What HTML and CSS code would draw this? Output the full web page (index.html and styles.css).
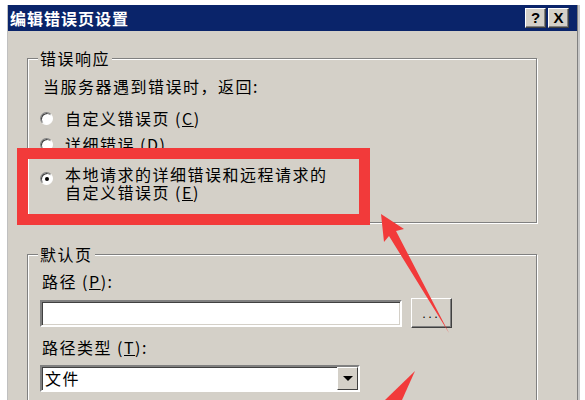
FILE: index.html
```html
<html>
<head>
<title>编辑错误页设置</title>
<meta charset="utf-8">
<link rel="stylesheet" href="styles.css">
</head>
<body>

<div class="dialog">
<div class="titlebar">
<span class="title">编辑错误页设置</span>
<div class="capButtons">
<span class="capBtn">?</span>
<span class="capBtn capClose">X</span>
</div>
</div>

<div class="dialogBody">

<div class="group groupResponse">
<div class="legend">错误响应</div>
<p class="intro">当服务器遇到错误时，返回:</p>
<div class="radioRow rowFirst"><span class="radio"></span><span class="radioText">自定义错误页 (<u>C</u>)</span></div>
<div class="radioRow rowSecond"><span class="radio"></span><span class="radioText">详细错误 (<u>D</u>)</span></div>
<div class="radioRow rowThird"><span class="radio checked"></span><span class="radioText twoLines">本地请求的详细错误和远程请求的<br>自定义错误页 (<u>E</u>)</span></div>
</div>

<div class="group groupDefault">
<div class="legend">默认页</div>
<p class="fieldLabel labelPath">路径 (<u>P</u>):</p>
<div class="pathRow">
<div class="textbox"></div>
<div class="browseBtn">...</div>
</div>
<p class="fieldLabel labelType">路径类型 (<u>T</u>):</p>
<div class="combo">
<span class="comboText">文件</span>
<span class="comboBtn"><span class="comboArrow"></span></span>
</div>
</div>

</div>
</div>

<!-- red markup drawn over the dialog -->
<div class="highlight"></div>
<svg class="arrows" width="585" height="400" viewBox="0 0 585 400">
<polygon points="381,214 404,229 396,231 449,333 389,236 384,242" fill="#f23a3a"/>
<polygon points="415,371 402,400 385,400" fill="#f23a3a"/>
</svg>

</body>
</html>
```

FILE: styles.css
```css
body{
margin:0;
background-color:#FFF;
overflow:hidden;
font-family:"Noto Sans CJK SC","Noto Sans",sans-serif;
font-size:16px;
letter-spacing:1.5px;
color:#000;
}

.dialog{
margin:5px 0 0 8px;
width:569px;
height:395px;
background-color:#D4D0C8;
box-shadow:1px 0 0 #808080,3px 0 0 #C8C8C8,-1px 0 0 #C0C0C0;
}

.titlebar{
display:flex;
align-items:center;
justify-content:space-between;
height:26px;
padding-left:2px;
background-color:#0A246A;
}
.title{
color:#FFF;
font-weight:bold;
letter-spacing:1px;
line-height:26px;
}
.capButtons{display:flex;gap:2px;margin-right:8px;}
.capBtn{
display:flex;
justify-content:center;
align-items:center;
width:19px;
height:18px;
background-color:#D4D0C8;
border:1px solid;
border-color:#FFF #404040 #404040 #FFF;
box-shadow:inset -1px -1px 0 #808080;
font-family:"Liberation Sans",sans-serif;
font-weight:bold;
font-size:15px;
letter-spacing:0;
line-height:18px;
}

.dialogBody{padding:27px 40px 0 19px;}

.group{
border:1px solid #808080;
box-shadow:1px 1px 0 #FFF,inset 1px 1px 0 #FFF;
padding:0 12px 0 12px;
}
.groupResponse{padding-bottom:21px;}
.groupDefault{margin-top:31px;height:150px;}

.legend{
width:fit-content;
margin:-10px 0 0 -2px;
padding:0 2px;
line-height:18px;
background-color:#D4D0C8;
}

p{margin:0;line-height:20px;}
.intro{margin-top:9px;padding-left:3px;}

.radioRow{display:flex;align-items:center;gap:12px;line-height:20px;}
.rowFirst{margin-top:12px;}
.rowSecond{margin-top:6px;}
.rowThird{margin-top:11px;align-items:flex-start;}
.twoLines{line-height:18px;}
.rowThird .radio{margin-top:7px;}

.radio{
position:relative;
flex:none;
width:11px;
height:11px;
border-radius:50%;
background-color:#FFF;
border:1px solid;
border-color:#808080 #FFF #FFF #808080;
box-shadow:inset 1px 1px 0 #404040;
}
.radio.checked::after{
content:"";
position:absolute;
left:4px;
top:4px;
width:4px;
height:4px;
border-radius:50%;
background-color:#000;
}

.fieldLabel{padding-left:2px;}
.labelPath{margin-top:8px;}
.labelType{margin-top:9px;}

.pathRow{display:flex;align-items:center;gap:9px;margin-top:7px;}
.textbox{
width:358px;
height:23px;
background-color:#FFF;
border:2px solid;
border-color:#808080 #FFF #FFF #808080;
box-shadow:inset 1px 1px 0 #404040,inset -1px -1px 0 #D4D0C8;
}
.browseBtn{
display:flex;
justify-content:center;
align-items:center;
width:39px;
height:28px;
border:1px solid;
border-color:#FFF #404040 #404040 #FFF;
box-shadow:inset -1px -1px 0 #808080;
font-size:11px;
letter-spacing:3px;
}

.combo{
display:flex;
justify-content:space-between;
align-items:center;
margin-top:8px;
width:316px;
height:23px;
background-color:#FFF;
border:2px solid;
border-color:#808080 #FFF #FFF #808080;
box-shadow:inset 1px 1px 0 #404040;
}
.comboText{padding-left:3px;line-height:23px;}
.comboBtn{
display:flex;
justify-content:center;
align-items:center;
width:19px;
height:21px;
background-color:#D4D0C8;
border:1px solid;
border-color:#FFF #404040 #404040 #FFF;
}
.comboArrow{
width:0;
height:0;
border-left:5px solid transparent;
border-right:5px solid transparent;
border-top:5px solid #000;
}

.highlight{
position:absolute;
left:17px;
top:148px;
width:331px;
height:55px;
border:11px solid #F23A3A;
}
.arrows{position:absolute;left:0;top:0;pointer-events:none;}
```
